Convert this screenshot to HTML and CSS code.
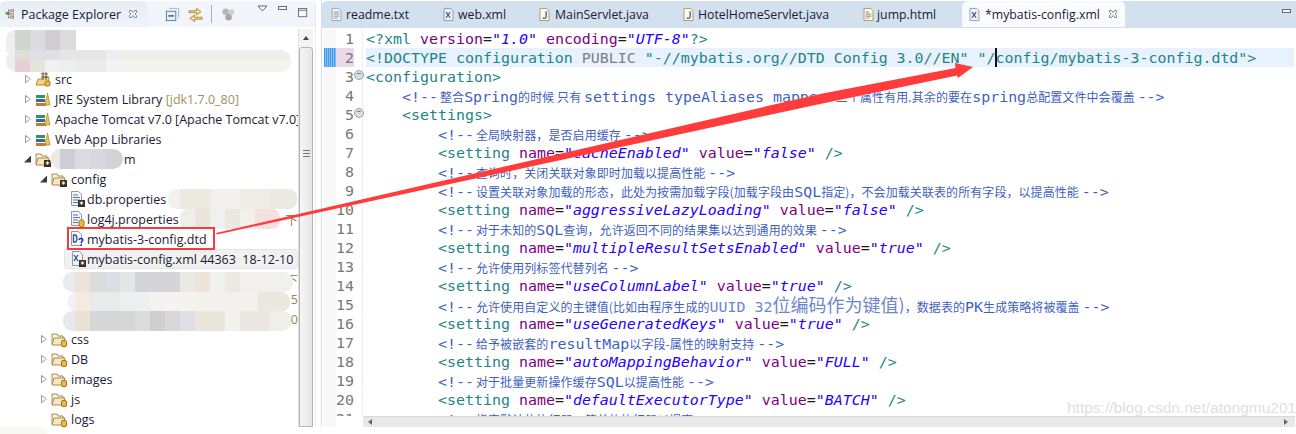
FILE: index.html
```html
<!DOCTYPE html>
<html lang="en">
<head>
<meta charset="utf-8">
<title>Eclipse</title>
<link rel="stylesheet" href="styles.css">
</head>
<body>
<svg class="defs" width="0" height="0">
  <symbol id="pkgx" viewBox="0 0 16 16"><path d="M5 1v13M5 3h3M5 8h3M5 13h3" stroke="#7a6a55" fill="none"/><path d="M1 5h6v4H1zM8 1h5v4H8zM8 6h5v4H8zM8 11h5v4H8z" fill="#8c7b66"/><path d="M9 2h3v2H9zM9 7h3v2H9zM9 12h3v2H9z" fill="#e8e0d0"/></symbol>
  <symbol id="src" viewBox="0 0 16 16"><path d="M1 14L3 8h4l1-2h6l-1 8z" fill="#f3d28e" stroke="#b08a3c"/><path d="M8 1v8M11 1v8M6 3h7M6 6h7" stroke="#6b5a3a" fill="none"/><rect x="10" y="10" width="5" height="5" rx="1.5" fill="#f0b93a" stroke="#a0761c"/></symbol>
  <symbol id="lib" viewBox="0 0 16 16"><rect x="1" y="4" width="9" height="3" fill="#3b8a7a"/><rect x="1" y="8" width="9" height="3" fill="#2f6f8f"/><rect x="1" y="12" width="10" height="3" fill="#c07a3a"/><path d="M10 14L12.5 2 15 14z" fill="#f0c050" stroke="#b08420" stroke-width=".7"/></symbol>
  <symbol id="fstar" viewBox="0 0 16 16"><path d="M1 13V3h5l1 2h5v2" fill="#fbf3df" stroke="#a88a52"/><path d="M1 14l2-7h11l-2 7z" fill="#f7e6c0" stroke="#a88a52"/><rect x="9" y="9" width="7" height="7" fill="#3a2e1e"/><path d="M12.5 10.2v3.6M10.7 12h3.6M11.2 10.7l2.6 2.6M13.8 10.7l-2.6 2.6" stroke="#fff" stroke-width=".8"/></symbol>
  <symbol id="fold" viewBox="0 0 16 16"><path d="M1 13V3h5l1 2h5v2" fill="#fbf3df" stroke="#a88a52"/><path d="M1 14l2-7h11l-2 7z" fill="#f7e6c0" stroke="#a88a52"/><rect x="10.5" y="9.5" width="5" height="6" rx="1.5" fill="#f0b93a" stroke="#a0761c"/></symbol>
  <symbol id="fprop" viewBox="0 0 16 16"><path d="M2.500 .5h7l3 3v11h-10z" fill="#f4f6fa" stroke="#8a9ab0"/><path d="M4 4h5M4 6.500h7M4 9h7M4 11.500h5" stroke="#5a7aa0"/><rect x="9" y="9" width="7" height="7" fill="#3a2e1e"/><path d="M12.500 10.200v3.600M10.700 12h3.600M11.200 10.700l2.600 2.600M13.800 10.700l-2.600 2.600" stroke="#fff" stroke-width=".8"/></symbol>
  <symbol id="fcyl" viewBox="0 0 16 16"><path d="M2.500 .5h7l3 3v11h-10z" fill="#f4f6fa" stroke="#8a9ab0"/><path d="M4 4h5M4 6.500h7M4 9h5M4 11.500h5" stroke="#5a7aa0"/><rect x="10" y="9" width="5" height="6.500" rx="1.500" fill="#f0b93a" stroke="#a0761c"/></symbol>
  <symbol id="fdtd" viewBox="0 0 16 16"><path d="M2.500 .5h7l3 3v11h-10z" fill="#f4f6fa" stroke="#8a9ab0"/><path d="M4.500 4v7h1.500c2.500 0 2.500-7 0-7z" fill="none" stroke="#34528a" stroke-width="1.300"/><path d="M10 9c0-2 4-2 4 0 0 1.500-2 1.500-2 3" fill="none" stroke="#1530c0" stroke-width="1.300"/><path d="M11.300 13.500h1.500V15h-1.500z" fill="#1530c0"/></symbol>
  <symbol id="fxml" viewBox="0 0 16 16"><path d="M2.500 .5h7l3 3v11h-10z" fill="#eef1f7" stroke="#8a9ab0"/><path d="M4 4l4 6M8 4l-4 6" stroke="#34528a" stroke-width="1.300"/><rect x="9" y="9" width="7" height="7" fill="#3a2e1e"/><path d="M12.500 10.200v3.600M10.700 12h3.600M11.200 10.700l2.600 2.600M13.800 10.700l-2.600 2.600" stroke="#fff" stroke-width=".8"/></symbol>
  <symbol id="ftxt" viewBox="0 0 16 16"><path d="M2.500 .5h8l3 3v12h-11z" fill="#f4f6fa" stroke="#8d95a5"/><path d="M4.500 5h7M4.500 7.500h7M4.500 10h7M4.500 12.500h5" stroke="#75808f"/></symbol>
  <symbol id="fx" viewBox="0 0 16 16"><path d="M2.500 .5h8l3 3v12h-11z" fill="#eef1f7" stroke="#7d8ba5"/><path d="M5 5l5 7M10 5l-5 7" stroke="#34528a" stroke-width="1.400"/></symbol>
  <symbol id="fj" viewBox="0 0 16 16"><path d="M2.500 .5h8l3 3v12h-11z" fill="#fdfaf0" stroke="#a08a4c"/><path d="M10 4v7c0 2-3 2-4 1" fill="none" stroke="#2c4f86" stroke-width="1.500"/></symbol>
  <symbol id="fhtml" viewBox="0 0 16 16"><path d="M2.500 .5h8l3 3v12h-11z" fill="#fdfaf0" stroke="#a08a4c"/><path d="M4.500 5h4" stroke="#c04040"/><path d="M4.500 7.500h7" stroke="#3a8a50"/><path d="M4.500 10h7" stroke="#3a60c0"/><path d="M4.500 12.500h5" stroke="#c08030"/></symbol>
  <symbol id="close" viewBox="0 0 10 10"><path d="M1.500 1.500l2 0 1.500 2 1.500-2 2 0 0 2-1.500 1.500 1.500 1.500 0 2-2 0-1.500-2-1.500 2-2 0 0-2 1.500-1.500-1.500-1.500z" fill="#f4f4f4" stroke="#7f8a93"/></symbol>
</svg>

<div class="workbench">
  <section class="explorer">
    <header class="ex-head">
      <div class="ex-tab">
        <svg class="tab-ic"><use href="#pkgx"/></svg>
        <span>Package Explorer</span>
        <svg class="x"><use href="#close"/></svg>
      </div>
      <div class="ex-tools">
        <svg class="tool" viewBox="0 0 16 16"><path d="M4.500 1.500h10v10" fill="none" stroke="#9db4c8"/><rect x="1.500" y="4.500" width="10" height="10" fill="#e8f0f6" stroke="#557a9a"/><path d="M3.500 9.500h6" stroke="#2a5078" stroke-width="1.500"/></svg>
        <svg class="tool" viewBox="0 0 16 16"><path d="M1 4h8V1.500L14 5l-5 3.500V6H1z" fill="#f6dfa0" stroke="#b08a2c"/><path d="M15 11H7V8.500L2 12l5 3.500V13h8z" fill="#f6dfa0" stroke="#b08a2c"/></svg>
        <i class="tool-sep"></i>
        <svg class="tool" viewBox="0 0 16 16"><circle cx="5" cy="5" r="3.500" fill="#b8b8b8"/><circle cx="11" cy="5.500" r="3" fill="#cfcfcf"/><circle cx="8" cy="11" r="3.500" fill="#a8a8a8"/></svg>
        <svg class="tool-sm menu" viewBox="0 0 12 8"><path d="M1 1h9L5.500 6z" fill="#f6f8fb" stroke="#5f6d7a"/></svg>
        <svg class="tool-sm min" viewBox="0 0 12 8"><rect x="1.500" y="1.500" width="8" height="3" fill="#f6f8fb" stroke="#5f6d7a"/></svg>
        <svg class="tool max" viewBox="0 0 12 12"><rect x=".5" y=".5" width="9" height="9" fill="#f6f8fb" stroke="#5f6d7a"/><path d="M.5 2.500h9" stroke="#5f6d7a"/></svg>
      </div>
    </header>
    <div class="ex-body">
      <div class="tree">
        <div class="row"></div>
        <div class="row"></div>
        <div class="row d1"><i class="tw"></i><svg class="ic"><use href="#src"/></svg><span>src</span></div>
        <div class="row d1"><i class="tw"></i><svg class="ic"><use href="#lib"/></svg><span>JRE System Library <em>[jdk1.7.0_80]</em></span></div>
        <div class="row d1"><i class="tw"></i><svg class="ic"><use href="#lib"/></svg><span>Apache Tomcat v7.0 [Apache Tomcat v7.0]</span></div>
        <div class="row d1"><i class="tw"></i><svg class="ic"><use href="#lib"/></svg><span>Web App Libraries</span></div>
        <div class="row d1"><i class="tw open"></i><svg class="ic"><use href="#fstar"/></svg><span class="proj">m</span></div>
        <div class="row d2"><i class="tw open"></i><svg class="ic"><use href="#fstar"/></svg><span>config</span></div>
        <div class="row d3"><svg class="ic"><use href="#fprop"/></svg><span>db.properties</span></div>
        <div class="row d3"><svg class="ic"><use href="#fcyl"/></svg><span>log4j.properties</span><b class="tail">下</b></div>
        <div class="row d3"><svg class="ic"><use href="#fdtd"/></svg><span>mybatis-3-config.dtd</span></div>
        <div class="row d3 sel"><svg class="ic"><use href="#fxml"/></svg><span>mybatis-config.xml 44363&nbsp; 18-12-10</span></div>
        <div class="row"><b class="tail">下</b></div>
        <div class="row"><b class="tail">5</b></div>
        <div class="row"><b class="tail">0</b></div>
        <div class="row d2"><i class="tw"></i><svg class="ic"><use href="#fold"/></svg><span>css</span></div>
        <div class="row d2"><i class="tw"></i><svg class="ic"><use href="#fold"/></svg><span>DB</span></div>
        <div class="row d2"><i class="tw"></i><svg class="ic"><use href="#fold"/></svg><span>images</span></div>
        <div class="row d2"><i class="tw"></i><svg class="ic"><use href="#fold"/></svg><span>js</span></div>
        <div class="row d2"><i class="tw none"></i><svg class="ic"><use href="#fold"/></svg><span>logs</span></div>
      </div>
      <div class="vbar">
        <div class="up"></div>
        <div class="thumb"><i class="grip"></i></div>
      </div>
    </div>
  </section>

  <section class="editor">
    <nav class="tabs">
      <div class="tab t1"><svg class="tab-ic"><use href="#ftxt"/></svg><span>readme.txt</span></div>
      <div class="tab t2"><svg class="tab-ic"><use href="#fx"/></svg><span>web.xml</span></div>
      <div class="tab t3"><svg class="tab-ic"><use href="#fj"/></svg><span>MainServlet.java</span></div>
      <div class="tab t4"><svg class="tab-ic"><use href="#fj"/></svg><span>HotelHomeServlet.java</span></div>
      <div class="tab t5"><svg class="tab-ic"><use href="#fhtml"/></svg><span>jump.html</span></div>
      <div class="tab t6 active"><svg class="tab-ic"><use href="#fx"/></svg><span>*mybatis-config.xml</span><svg class="x"><use href="#close"/></svg></div>
      <svg class="tab-min" viewBox="0 0 12 8"><rect x="1.500" y="1.500" width="8" height="3" fill="#f6f8fb" stroke="#5f6d7a"/></svg>
    </nav>
    <div class="code">
      <div class="ln"><i class="rul"></i><b class="num">1</b><i class="fld"></i><code><span class="t">&lt;?xml</span> <span class="a">version</span>=<span class="v">"1.0"</span> <span class="a">encoding</span>=<span class="v">"UTF-8"</span><span class="t">?&gt;</span></code></div>
      <div class="ln cur"><i class="rul mark"></i><b class="num">2</b><i class="fld"></i><code><span class="t">&lt;!DOCTYPE configuration</span> <span class="g">PUBLIC</span> <span class="t">"-//mybatis.org//DTD Config 3.0//EN" "/</span><i class="caret"></i><span class="t">config/mybatis-3-config.dtd"&gt;</span></code></div>
      <div class="ln"><i class="rul"></i><b class="num">3</b><i class="fld on"></i><code><span class="t">&lt;configuration&gt;</span></code></div>
      <div class="ln"><i class="rul"></i><b class="num">4</b><i class="fld"></i><code class="c">    &lt;!--<span class="z">整合</span>Spring<span class="z">的时候 只有 </span>settings typeAliases <u>mapper</u> <span class="z">三个属性有用.其余的要在</span>spring<span class="z">总配置文件中会覆盖 </span>--&gt;</code></div>
      <div class="ln"><i class="rul"></i><b class="num">5</b><i class="fld on"></i><code>    <span class="t">&lt;settings&gt;</span></code></div>
      <div class="ln"><i class="rul"></i><b class="num">6</b><i class="fld"></i><code class="c">        &lt;!--<span class="z">全局映射器&#xFF0C;是否启用缓存 </span>--&gt;</code></div>
      <div class="ln"><i class="rul"></i><b class="num">7</b><i class="fld"></i><code>        <span class="t">&lt;setting</span> <span class="a">name</span>=<span class="v">"cacheEnabled"</span> <span class="a">value</span>=<span class="v">"false"</span> <span class="t">/&gt;</span></code></div>
      <div class="ln"><i class="rul"></i><b class="num">8</b><i class="fld"></i><code class="c">        &lt;!--<span class="z">查询时&#xFF0C;关闭关联对象即时加载以提高性能 </span>--&gt;</code></div>
      <div class="ln"><i class="rul"></i><b class="num">9</b><i class="fld"></i><code class="c">        &lt;!--<span class="z">设置关联对象加载的形态&#xFF0C;此处为按需加载字段(加载字段由</span>SQL<span class="z">指定)&#xFF0C;不会加载关联表的所有字段&#xFF0C;以提高性能 </span>--&gt;</code></div>
      <div class="ln"><i class="rul"></i><b class="num">10</b><i class="fld"></i><code>        <span class="t">&lt;setting</span> <span class="a">name</span>=<span class="v">"aggressiveLazyLoading"</span> <span class="a">value</span>=<span class="v">"false"</span> <span class="t">/&gt;</span></code></div>
      <div class="ln"><i class="rul"></i><b class="num">11</b><i class="fld"></i><code class="c">        &lt;!--<span class="z">对于未知的</span>SQL<span class="z">查询&#xFF0C;允许返回不同的结果集以达到通用的效果 </span>--&gt;</code></div>
      <div class="ln"><i class="rul"></i><b class="num">12</b><i class="fld"></i><code>        <span class="t">&lt;setting</span> <span class="a">name</span>=<span class="v">"multipleResultSetsEnabled"</span> <span class="a">value</span>=<span class="v">"true"</span> <span class="t">/&gt;</span></code></div>
      <div class="ln"><i class="rul"></i><b class="num">13</b><i class="fld"></i><code class="c">        &lt;!--<span class="z">允许使用列标签代替列名 </span>--&gt;</code></div>
      <div class="ln"><i class="rul"></i><b class="num">14</b><i class="fld"></i><code>        <span class="t">&lt;setting</span> <span class="a">name</span>=<span class="v">"useColumnLabel"</span> <span class="a">value</span>=<span class="v">"true"</span> <span class="t">/&gt;</span></code></div>
      <div class="ln"><i class="rul"></i><b class="num">15</b><i class="fld"></i><code class="c">        &lt;!--<span class="z">允许使用自定义的主键值(比如由程序生成的</span><span class="lt">UUID 32</span><span class="zl">位编码作为键值)</span><span class="z">&#xFF0C;数据表的</span>PK<span class="z">生成策略将被覆盖 </span>--&gt;</code></div>
      <div class="ln"><i class="rul"></i><b class="num">16</b><i class="fld"></i><code>        <span class="t">&lt;setting</span> <span class="a">name</span>=<span class="v">"useGeneratedKeys"</span> <span class="a">value</span>=<span class="v">"true"</span> <span class="t">/&gt;</span></code></div>
      <div class="ln"><i class="rul"></i><b class="num">17</b><i class="fld"></i><code class="c">        &lt;!--<span class="z">给予被嵌套的</span>resultMap<span class="z">以字段-属性的映射支持 </span>--&gt;</code></div>
      <div class="ln"><i class="rul"></i><b class="num">18</b><i class="fld"></i><code>        <span class="t">&lt;setting</span> <span class="a">name</span>=<span class="v">"autoMappingBehavior"</span> <span class="a">value</span>=<span class="v">"FULL"</span> <span class="t">/&gt;</span></code></div>
      <div class="ln"><i class="rul"></i><b class="num">19</b><i class="fld"></i><code class="c">        &lt;!--<span class="z">对于批量更新操作缓存</span>SQL<span class="z">以提高性能 </span>--&gt;</code></div>
      <div class="ln"><i class="rul"></i><b class="num">20</b><i class="fld"></i><code>        <span class="t">&lt;setting</span> <span class="a">name</span>=<span class="v">"defaultExecutorType"</span> <span class="a">value</span>=<span class="v">"BATCH"</span> <span class="t">/&gt;</span></code></div>
      <div class="ln"><i class="rul"></i><b class="num">21</b><i class="fld"></i><code class="c">        &lt;!--<span class="z">指定默认的执行器&#xFF0C;简单的执行器以提高</span>--&gt;</code></div>
    </div>
    <div class="hbar"><i class="hgut"></i><div class="htrack"><i class="al"></i><i class="ar"></i></div></div>
  </section>
</div>

<div class="blur b-a"></div>
<div class="blur b-b"></div>
<div class="blur b-c"></div>
<div class="blur b-d"></div>
<div class="blur b-e"></div>
<div class="blur b-f"></div>
<div class="blur b-g"></div>
<div class="blur b-h"></div>
<div class="blur b-i"></div>
<div class="redbox"></div>
<svg class="arrow" viewBox="0 0 1296 434"><path d="M216 233L820 94 955.500 68 955 63 973 67 958 78 957 75.500 820 104 217 234.500z" fill="#ff3b3b"/></svg>
<div class="watermark">https://blog.csdn.net/atongmu2018</div>
</body>
</html>
```

FILE: styles.css
```css
* { box-sizing: border-box; }
html, body { margin: 0; padding: 0; }
body {
  position: relative;
  width: 1296px;
  height: 434px;
  overflow: hidden;
  background: #fff;
  font-family: "Open Sans", "Noto Sans CJK SC", sans-serif;
  font-size: 12.5px;
  color: #1b1b33;
}
.defs { position: absolute; }
.workbench { display: flex; height: 427px; }

/* Package explorer */
.explorer {
  width: 316px;
  margin-right: 5px;
  padding-top: 1px;
  display: flex;
  flex-direction: column;
  background: #fff;
  border-right: 1px solid #e3ebf5;
  border-radius: 5px 5px 0 0;
}
.ex-head {
  height: 26px;
  flex: none;
  display: flex;
  background: #f2f5fb;
  border-radius: 5px 5px 0 0;
}
.ex-tab {
  width: 148px;
  display: flex;
  align-items: center;
  padding-left: 5px;
  background: linear-gradient(#e6edf6, #eff4fa);
  border-radius: 5px 8px 0 0;
}
.tab-ic { width: 16px; height: 16px; flex: none; margin-right: 4px; }
.ex-tab .tab-ic { width: 11px; height: 14px; margin-right: 5px; }
.x { width: 10px; height: 10px; flex: none; margin-left: 7px; }
.ex-tools { flex: 1; position: relative; display: flex; align-items: center; padding-left: 17px; }
.tool { width: 15px; height: 15px; flex: none; margin-right: 8px; }
.tool-sep { width: 1px; height: 18px; background: #a9b2bb; margin: 0 9px 0 0; }
.tool-sm { width: 12px; height: 8px; flex: none; }
.menu { margin: -10px 8px 0 13px; }
.min { margin: -10px 10px 0 0; }
.max { width: 11px; height: 11px; margin: -1px 0 0 -1px; }

.ex-body { flex: 1; display: flex; min-height: 0; padding-top: 2px; overflow: hidden; }
.tree { width: 298px; flex: none; overflow: hidden; }
.row {
  height: 20px;
  display: flex;
  align-items: center;
  white-space: nowrap;
  overflow: hidden;
}
.d1 { padding-left: 24px; }
.d2 { padding-left: 40px; }
.d3 { padding-left: 69px; }
.tw {
  position: relative;
  width: 6px;
  height: 9px;
  flex: none;
  background: #9aa0a6;
  clip-path: polygon(0 0, 100% 50%, 0 100%, 0 0, 1px 2px, 1px 7px, 5px 4.5px, 1px 2px);
  margin-left: 1px;
  margin-right: 4px;
}
.tw.open {
  width: 7px;
  height: 7px;
  background: #3c3c3c;
  clip-path: polygon(100% 0, 100% 100%, 0 100%);
  margin-left: 0;
}
.tw.none { visibility: hidden; }
.ic { width: 16px; height: 16px; flex: none; margin-right: 4px; }
.d3 .ic { margin-right: 2px; }
.row em { font-style: normal; color: #a0905c; }
.proj { margin-left: 69px; }
.sel {
  margin-left: 64px;
  padding-left: 5px;
  background: #f1f1f1;
  border: 1px solid #e4e4e4;
  border-radius: 3px;
  width: 234px;
}
.sel .ic { margin-right: 1px; }
.tail { margin-left: auto; font-weight: 400; color: #a08050; }

.vbar {
  width: 15px;
  margin-left: 0;
  flex: none;
  display: flex;
  flex-direction: column;
  background: #f4f4f4;
  border-left: 1px solid #e0e0e0;
}
.up { height: 18px; flex: none; position: relative; }
.up::after {
  content: "";
  position: absolute;
  left: 4px;
  top: 7px;
  border: 3px solid transparent;
  border-top: 0;
  border-bottom: 4px solid #444;
}
.thumb {
  flex: 1;
  display: flex;
  align-items: center;
  justify-content: center;
  background: linear-gradient(90deg, #f6f6f6, #e6e6e6);
  border: 1px solid #b4b4b4;
  border-radius: 3px 3px 0 0;
}
.grip { width: 7px; height: 7px; margin-top: -168px; background: repeating-linear-gradient(#777 0 1px, transparent 1px 3px); }

/* Editor */
.editor {
  flex: 1;
  min-width: 0;
  display: flex;
  flex-direction: column;
  background: #fff;
  border-left: 1px solid #d2e0ef;
}
.tabs {
  height: 27px;
  flex: none;
  display: flex;
  position: relative;
  margin-top: 1px;
  font-size: 12.3px;
  background: #d3e1ef;
  border-bottom: 1px solid #d3e1ef;
  border-radius: 5px 0 0 0;
}
.tab { display: flex; align-items: center; flex: none; padding-left: 8px; white-space: nowrap; }
.t1 { width: 112px; }
.t2 { width: 96px; }
.t3 { width: 144px; }
.t4 { width: 180px; }
.t5 { width: 108px; }
.t6 { width: 163px; padding-left: 6px; }
.tab .tab-ic { width: 13px; height: 15px; margin-right: 3px; }
.t3 .tab-ic, .t6 .tab-ic { margin-right: 4px; }
.t5 .tab-ic { margin-right: 2px; }
.active { background: #fafbfd; border-radius: 6px 6px 0 0; }
.active .x { margin-left: 8px; }
.tab-min { position: absolute; right: 3px; top: 7px; width: 12px; height: 8px; }

.code {
  flex: 1;
  min-height: 0;
  padding-top: 1px;
  overflow: hidden;
  font-family: "DejaVu Sans Mono", "Noto Sans CJK SC", monospace;
  font-size: 14.95px;
  color: #1a1a1a;
}
.ln { height: 19px; line-height: 21px; display: flex; white-space: pre; }
.rul { width: 12px; flex: none; margin-left: 2px; background: #f8f8f8; }
.rul.mark {
  background: repeating-linear-gradient(90deg, #3f9bec 0 1px, #86c0f3 1px 2px);
}
.num {
  width: 18px;
  flex: none;
  text-align: right;
  font-weight: 400;
  color: #787878;
}
.cur .num { background: #e9d9e9; }
.fld {
  width: 9px;
  flex: none;
  border-right: 1px solid #efefef;
  margin-right: 3px;
  position: relative;
}
.fld.on::after {
  content: "−";
  position: absolute;
  left: 0;
  top: 3px;
  width: 8px;
  height: 8px;
  border-radius: 50%;
  background: #d8dde2;
  border: 1px solid #9aa4ad;
  font: 8px/6px "Liberation Sans", sans-serif;
  text-align: center;
  color: #444;
}
code { font: inherit; flex: 1; min-width: 0; overflow: hidden; }
.cur code { background: #e8f2fe; margin-right: 2px; }
.t { color: #1f8585; }
.a { color: #7f007f; }
.v { color: #2a00ff; font-style: italic; }
.g { color: #808080; }
.c { color: #3f5fbf; }
.z { font-family: "Noto Sans CJK SC", sans-serif; font-size: 12px; letter-spacing: .08px; }
.c > .z:first-child { margin-left: 2px; }
.lt { color: #7086cc; }
.zl { font-family: "Noto Sans CJK SC", sans-serif; font-size: 18px; line-height: 1; color: #7086cc; }
u { text-decoration: underline wavy #e88a80 1px; text-underline-offset: 2px; }
.caret {
  display: inline-block;
  width: 2px;
  height: 19px;
  margin: 0 -1px;
  vertical-align: top;
  background: #111;
  position: relative;
}
.hbar { height: 11px; flex: none; display: flex; }
.hgut { width: 39px; margin-left: 2px; flex: none; background: #f8f8f8; box-shadow: inset -27px 0 0 #fff; }
.htrack {
  flex: 1;
  margin-right: 1px;
  position: relative;
  background: #e9e9e9;
  border-top: 1px solid #d8d8d8;
}
.al, .ar { position: absolute; top: 2px; border: 3px solid transparent; }
.al { left: 5px; border-left: 0; border-right: 4px solid #666; }
.ar { right: 7px; border-right: 0; border-left: 4px solid #666; }

/* Overlays on top of the screenshot */
.blur { position: absolute; filter: blur(.6px); }
.b-a {
  left: 6px; top: 30px; width: 70px; height: 22px;
  border-radius: 9px 0 0 0;
  background: linear-gradient(90deg, #eeeeee 0 9px, #d0d6cf 9px 24px, #dbdce1 24px 39px, #cfcdd2 39px 54px, #dcdcdf 54px);
}
.b-b {
  left: 6px; top: 50px; width: 285px; height: 22px;
  border-radius: 10px;
  background:
    linear-gradient(90deg, #eeeeee 0 9px, #e8cfd4 9px 24px, #e5e3dd 24px 39px, #f0f0f1 39px 54px, #edeef0 54px 69px, #ecebeb 69px 100px, #f3f3f7 100px 114px, #f4f3ee 114px 200px, #f4f3ee 200px) 0 10px / 100% 12px no-repeat,
    linear-gradient(90deg, #eeeeee 0 9px, #dfdfd8 9px 24px, #dfe0e3 24px 54px, #e6e6e6 54px 100px, #eeeef2 100px 114px, #efeee8 114px);
}
.b-c {
  left: 50px; top: 149px; width: 73px; height: 20px;
  border-radius: 10px;
  background: linear-gradient(90deg, #ece9e6 0 10px, #cecdd6 10px 25px, #dcdce0 25px 40px, #d9d9dd 40px 55px, #d2d2d8 55px);
}
.b-d {
  left: 168px; top: 189px; width: 129px; height: 20px;
  border-radius: 8px;
  background: linear-gradient(90deg, #f2f1ed 0 12px, #ece9e1 12px 42px, #f1f0ec 42px 72px, #eeece6 72px 102px, #ece9e0 102px);
}
.b-e {
  left: 180px; top: 209px; width: 100px; height: 20px;
  border-radius: 8px;
  background: linear-gradient(90deg, #f0eeea 0 15px, #e9e5dc 15px 30px, #f0f0ee 30px 45px, #ebe8e0 45px 60px, #f2f1ee 60px 75px, #f7e0e0 75px);
}
.b-f {
  left: 63px; top: 272px; width: 230px; height: 20px;
  border-radius: 9px;
  background: linear-gradient(90deg, #e8ecef 0 12px, #ebe4da 12px 27px, #dcdbdb 27px 42px, #d8dee4 42px 57px, #e4e6e9 57px 72px, #d4d5d8 72px 117px, #ece9e3 117px 132px, #ebe5da 132px 147px, #f1f1ee 147px 162px, #ece9e0 162px 177px, #f1f0ec 177px);
}
.b-g {
  left: 68px; top: 292px; width: 222px; height: 20px;
  border-radius: 9px;
  background: linear-gradient(90deg, #f0f2f4 0 8px, #f3ebe0 8px 22px, #e9eaeb 22px 52px, #eeefef 52px 82px, #f4f3f0 82px 130px, #f2f1ed 130px 190px, #ebe8e2 190px);
}
.b-h {
  left: 63px; top: 311px; width: 228px; height: 20px;
  border-radius: 9px;
  background: linear-gradient(90deg, #e6eaef 0 12px, #e9e1d3 12px 27px, #d6d6d8 27px 72px, #dcdcdc 72px 87px, #cfcfcf 87px 102px, #d8d8d8 102px 117px, #dde0e4 117px 132px, #ebe6dc 132px 162px, #f2f1ee 162px 177px, #ebe7e0 177px 207px, #efeee9 207px);
}
.b-i {
  left: 0; top: 427px; width: 47px; height: 7px;
  background: #f8f9f2;
}
.redbox {
  position: absolute;
  left: 67px;
  top: 227px;
  width: 148px;
  height: 23px;
  border: 2px solid #f53b3b;
}
.arrow { position: absolute; inset: 0; width: 1296px; height: 434px; pointer-events: none; }
.watermark {
  position: absolute;
  left: 1067px;
  top: 398px;
  white-space: nowrap;
  font: 15.5px/20px "Liberation Sans", sans-serif;
  color: rgba(190, 190, 190, .5);
}
```
